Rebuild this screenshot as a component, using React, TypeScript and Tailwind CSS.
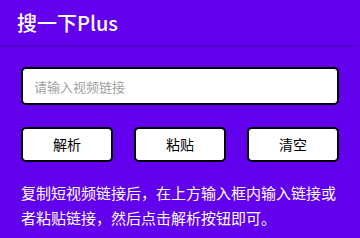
export default function App() {
  return (
    <div
      className="w-[360px] h-[238px] bg-[#6200ee] overflow-hidden"
      style={{ fontFamily: '"Noto Sans CJK SC", Roboto, sans-serif' }}
    >
      <header className="h-[45px] flex items-center px-[17px] shadow-[0_1px_3px_rgba(0,0,0,0.25)]">
        <h1 className="text-white text-[20px] font-medium leading-none">搜一下Plus</h1>
      </header>

      <main className="px-[21px] pt-[22px]">
        <input
          className="w-full h-[38px] bg-white border-2 border-black rounded-[5px] px-[11px] text-[13px] text-black placeholder:text-[#a0a0a0] outline-none"
          placeholder="请输入视频链接"
        />

        <div className="flex justify-between mt-[22px]">
          {['解析', '粘贴', '清空'].map((label) => (
            <button
              key={label}
              className="w-[92px] h-[35px] bg-white border-2 border-black rounded-[5px] text-[14px] text-black"
            >
              {label}
            </button>
          ))}
        </div>

        <p className="mt-[18px] text-white text-[15px] leading-[25px]">
          复制短视频链接后，在上方输入框内输入链接或者粘贴链接，然后点击解析按钮即可。
        </p>
      </main>
    </div>
  );
}
